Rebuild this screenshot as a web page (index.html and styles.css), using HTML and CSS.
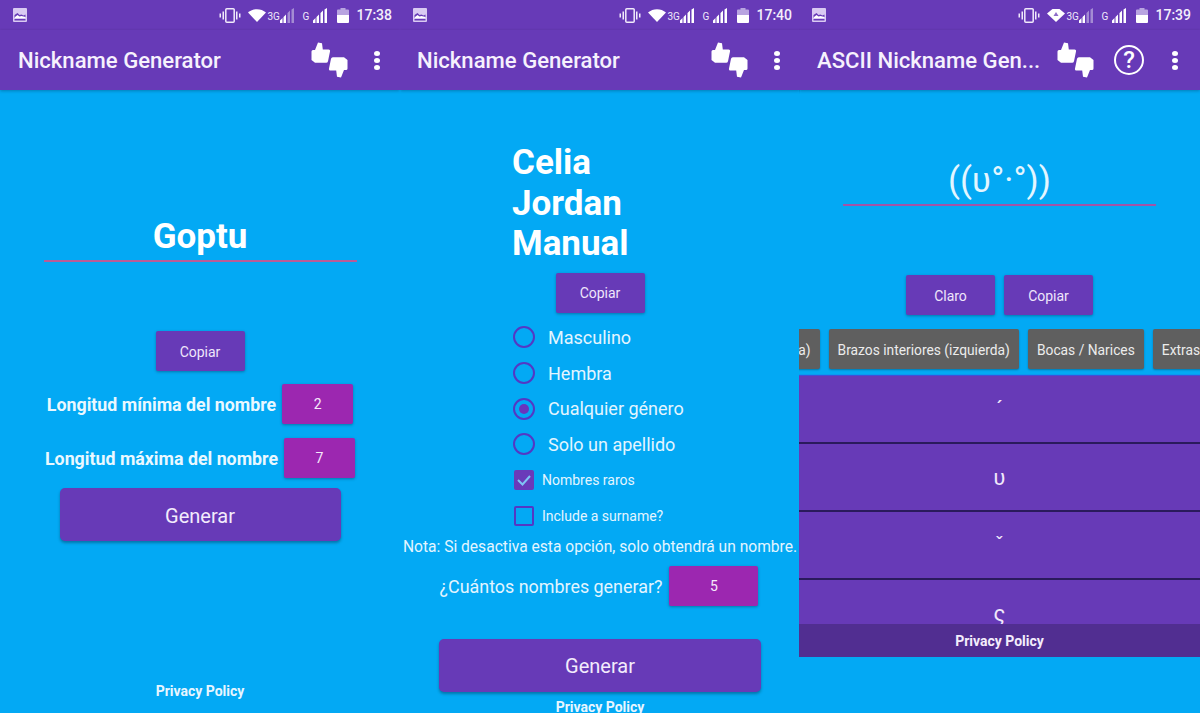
FILE: index.html
```html
<!DOCTYPE html>
<html lang="es">
<head>
    <meta charset="UTF-8">
    <meta name="viewport" content="width=device-width, initial-scale=1.0">
    <title>Nickname Generator</title>
    <link rel="stylesheet" href="styles.css">
</head>
<body>
    <svg class="defs" width="0" height="0">
        <symbol id="i-image" viewBox="0 0 14 14">
            <path fill="#d9c9f2" d="M0 1a1 1 0 0 1 1-1h12a1 1 0 0 1 1 1v12a1 1 0 0 1-1 1H1a1 1 0 0 1-1-1zM1.500 1.500v8h11v-3l-2 1-2-1-2 .5-2-2-3 2zM1.500 11v1.500h11V11z"/>
            <path fill="#fff" d="M2 9l2.500-2 2 1.500 2-.5 2 .5 2 .5v1H2z"/>
        </symbol>
        <symbol id="i-vibrate" viewBox="0 0 22 15">
            <path fill="none" stroke="#f1eafb" stroke-width="1.500" d="M7.800.8h6.400a1 1 0 0 1 1 1v11.400a1 1 0 0 1-1 1H7.800a1 1 0 0 1-1-1V1.800a1 1 0 0 1 1-1z"/>
            <path fill="#f1eafb" d="M3.500 3.500h1.500v8H3.500zM17 3.500h1.500v8H17zM.5 5.500H2v4H.5zM20 5.500h1.500v4H20z"/>
        </symbol>
        <symbol id="i-wifi" viewBox="0 0 18 13">
            <path fill="#fff" d="M0 3.500C5-1 13-1 18 3.500L9 13z"/>
        </symbol>
        <symbol id="i-wifi-data" viewBox="0 0 18 13">
            <path fill="#fff" d="M0 4.500L5.500 0h7L18 4.500 9 13z"/>
            <path fill="#8e6cc9" d="M9 3l2.500 4h-5z"/>
        </symbol>
        <symbol id="i-signal-weak" viewBox="0 0 15 15">
            <path fill="#fff" d="M0 15v-2.500L2.500 10v5zM3.500 15V9L6 6.500V15z"/>
            <path fill="#a48bd3" d="M7.500 15V5L10 2.500V15zM11.500 15V1.500L14 0v15z"/>
        </symbol>
        <symbol id="i-signal" viewBox="0 0 15 15">
            <path fill="#fff" d="M0 15v-2.500L2.500 10v5zM3.500 15V9L6 6.500V15zM7.500 15V5L10 2.500V15zM11.500 15V1.500L14 0v15z"/>
        </symbol>
        <symbol id="i-battery" viewBox="0 0 12 15">
            <path fill="#b8a4e0" d="M3.500 0h5v1.500H11a1 1 0 0 1 1 1V7H0V2.500a1 1 0 0 1 1-1h2.500z"/>
            <path fill="#fff" d="M0 7h12v7a1 1 0 0 1-1 1H1a1 1 0 0 1-1-1z"/>
        </symbol>
        <symbol id="i-thumbs" viewBox="0 0 37 36">
            <path fill="#fff" d="M7 .5l4 .8.8 6.200h5.700a1.500 1.500 0 0 1 1.500 2L17 19.200a2 2 0 0 1-2 1.500H4L.5 18V9.500A1.500 1.500 0 0 1 2 8h2z"/>
            <path fill="#fff" transform="rotate(180 18.500 18)" d="M7 .5l4 .8.8 6.200h5.700a1.500 1.500 0 0 1 1.500 2L17 19.200a2 2 0 0 1-2 1.500H4L.5 18V9.500A1.500 1.500 0 0 1 2 8h2z"/>
        </symbol>
    </svg>

    <div class="phones">
        <section class="phone">
            <div class="statusbar">
                <svg class="ic-image"><use href="#i-image"/></svg>
                <div class="status-right">
                    <svg class="ic-vibrate"><use href="#i-vibrate"/></svg>
                    <svg class="ic-wifi"><use href="#i-wifi"/></svg>
                    <span class="net net-3g">3G</span>
                    <svg class="ic-signal"><use href="#i-signal-weak"/></svg>
                    <span class="net net-g">G</span>
                    <svg class="ic-signal"><use href="#i-signal"/></svg>
                    <svg class="ic-battery"><use href="#i-battery"/></svg>
                    <span class="clock">17:38</span>
                </div>
            </div>
            <header class="toolbar">
                <div class="toolbar-title">Nickname Generator</div>
                <svg class="ic-thumbs"><use href="#i-thumbs"/></svg>
                <div class="overflow-menu"><i></i><i></i><i></i></div>
            </header>
            <main class="screen">
                <div class="result result-one">Goptu</div>
                <button class="btn copy-one">Copiar</button>
                <div class="len-row len-first"><span>Longitud mínima del nombre</span><div class="num-box">2</div></div>
                <div class="len-row"><span>Longitud máxima del nombre</span><div class="num-box">7</div></div>
                <button class="btn-big big-one">Generar</button>
                <div class="privacy privacy-one">Privacy Policy</div>
            </main>
        </section>

        <section class="phone">
            <div class="statusbar">
                <svg class="ic-image"><use href="#i-image"/></svg>
                <div class="status-right">
                    <svg class="ic-vibrate"><use href="#i-vibrate"/></svg>
                    <svg class="ic-wifi"><use href="#i-wifi"/></svg>
                    <span class="net net-3g">3G</span>
                    <svg class="ic-signal"><use href="#i-signal"/></svg>
                    <span class="net net-g">G</span>
                    <svg class="ic-signal"><use href="#i-signal"/></svg>
                    <svg class="ic-battery"><use href="#i-battery"/></svg>
                    <span class="clock">17:40</span>
                </div>
            </div>
            <header class="toolbar toolbar-mid">
                <div class="toolbar-title">Nickname Generator</div>
                <svg class="ic-thumbs"><use href="#i-thumbs"/></svg>
                <div class="overflow-menu"><i></i><i></i><i></i></div>
            </header>
            <main class="screen">
                <div class="names">Celia<br>Jordan<br>Manual</div>
                <button class="btn copy-two">Copiar</button>
                <div class="options">
                    <div class="radio-row"><span class="radio"></span>Masculino</div>
                    <div class="radio-row"><span class="radio"></span>Hembra</div>
                    <div class="radio-row"><span class="radio radio-on"></span>Cualquier género</div>
                    <div class="radio-row"><span class="radio"></span>Solo un apellido</div>
                    <div class="check-row">
                        <span class="check check-on">
                            <svg viewBox="0 0 20 20"><path d="M4 10l4.500 4.500L16 6" fill="none" stroke="#7fc4f5" stroke-width="2"/></svg>
                        </span>Nombres raros
                    </div>
                    <div class="check-row"><span class="check"></span>Include a surname?</div>
                </div>
                <div class="note">Nota: Si desactiva esta opción, solo obtendrá un nombre.</div>
                <div class="count-row"><span>¿Cuántos nombres generar?</span><div class="num-box num-wide">5</div></div>
                <button class="btn-big big-two">Generar</button>
                <div class="privacy privacy-two">Privacy Policy</div>
            </main>
        </section>

        <section class="phone phone-ascii">
            <div class="statusbar">
                <svg class="ic-image"><use href="#i-image"/></svg>
                <div class="status-right">
                    <svg class="ic-vibrate"><use href="#i-vibrate"/></svg>
                    <svg class="ic-wifi"><use href="#i-wifi-data"/></svg>
                    <span class="net net-3g">3G</span>
                    <svg class="ic-signal"><use href="#i-signal-weak"/></svg>
                    <span class="net net-g">G</span>
                    <svg class="ic-signal"><use href="#i-signal"/></svg>
                    <svg class="ic-battery"><use href="#i-battery"/></svg>
                    <span class="clock">17:39</span>
                </div>
            </div>
            <header class="toolbar">
                <div class="toolbar-title">ASCII Nickname Gen...</div>
                <svg class="ic-thumbs"><use href="#i-thumbs"/></svg>
                <div class="help">?</div>
                <div class="overflow-menu"><i></i><i></i><i></i></div>
            </header>
            <main class="screen">
                <div class="result result-ascii">((ʋ°·°))</div>
                <div class="btn-pair">
                    <button class="btn">Claro</button>
                    <button class="btn">Copiar</button>
                </div>
                <div class="tabs">
                    <div class="tab">Brazos interiores (derecha)</div>
                    <div class="tab">Brazos interiores (izquierda)</div>
                    <div class="tab">Bocas / Narices</div>
                    <div class="tab">Extras</div>
                </div>
                <div class="glyph-list">
                    <div class="glyph">´</div>
                    <div class="glyph">ʋ</div>
                    <div class="glyph">ˇ</div>
                    <div class="glyph">ς</div>
                </div>
                <div class="privacy-bar">Privacy Policy</div>
            </main>
        </section>
    </div>
</body>
</html>
```

FILE: styles.css
```css
body {
    margin: 0;
    background: #03a9f4;
    font-family: Roboto, "Liberation Sans", sans-serif;
    color: #fff;
}
button {
    font-family: inherit;
    border: none;
    padding: 0;
    color: #fff;
}
.defs {
    display: block;
    height: 0;
}
.phones {
    display: flex;
    width: 1200px;
    height: 713px;
    overflow: hidden;
}
.phone {
    width: 400px;
    height: 713px;
    overflow: hidden;
    display: flex;
    flex-direction: column;
}
.phone-ascii {
    width: 401px;
    margin-left: -1px;
}

/* status bar */
.statusbar {
    height: 30px;
    flex: none;
    background: #673ab7;
    display: flex;
    align-items: center;
    padding: 0 8px 0 13px;
}
.phone-ascii .statusbar {
    padding-right: 9px;
}
.ic-image {
    width: 14px;
    height: 14px;
}
.status-right {
    margin-left: auto;
    display: flex;
    align-items: center;
}
.ic-vibrate {
    width: 22px;
    height: 15px;
}
.ic-wifi {
    width: 18px;
    height: 13px;
    margin-left: 7px;
}
.net {
    font-size: 10px;
    align-self: flex-start;
    margin-top: 4px;
    color: #efe8fa;
}
.net-3g {
    margin-left: 1px;
    width: 13px;
}
.net-g {
    margin-left: 7px;
    width: 11px;
}
.ic-signal {
    width: 15px;
    height: 15px;
}
.ic-battery {
    width: 12px;
    height: 15px;
    margin-left: 9px;
}
.clock {
    font-size: 14px;
    font-weight: 500;
    margin-left: 7px;
    color: #f3eefb;
}

/* toolbar */
.toolbar {
    height: 60px;
    flex: none;
    background: #673ab7;
    box-shadow: 0 1px 3px rgba(0, 0, 0, 0.25);
    display: flex;
    align-items: center;
    padding: 0 20px 0 18px;
    position: relative;
}
.toolbar-mid {
    padding-left: 17px;
}
.phone-ascii .toolbar {
    padding-right: 22px;
}
.toolbar-title {
    font-size: 22.100px;
    font-weight: 500;
    color: #f6f1fd;
    margin-right: auto;
    white-space: nowrap;
}
.ic-thumbs {
    width: 37px;
    height: 36px;
}
.overflow-menu {
    width: 6px;
    margin-left: 26px;
    display: flex;
    flex-direction: column;
    gap: 2px;
}
.overflow-menu i {
    width: 6px;
    height: 5px;
    border-radius: 50%;
    background: #fff;
}
.help {
    width: 26px;
    height: 26px;
    margin-left: 20px;
    margin-right: 2px;
    border: 2.500px solid #fff;
    border-radius: 50%;
    font-size: 24px;
    font-weight: 500;
    line-height: 26px;
    text-align: center;
}

/* content */
.screen {
    flex: 1;
    display: flex;
    flex-direction: column;
    align-items: center;
}
.result {
    width: 313px;
    box-sizing: border-box;
    text-align: center;
    border-bottom: 2px solid #b95c98;
}
.result-one {
    margin-top: 126px;
    height: 46px;
    font-size: 35px;
    font-weight: 700;
    line-height: 41px;
}
.result-ascii {
    margin-top: 68px;
    height: 48px;
    font-size: 35px;
    line-height: 46px;
    color: #e3f6ff;
    border-bottom-color: #a254a8;
}
.btn {
    width: 89px;
    height: 40px;
    background: #673ab7;
    border-radius: 2px;
    box-shadow: 0 1px 3px rgba(0, 0, 0, 0.3);
    font-size: 14px;
    color: #efe6fb;
}
.copy-one {
    margin-top: 69px;
    padding-top: 2px;
}
.len-row {
    display: flex;
    align-items: center;
    gap: 6px;
    margin-top: 14px;
    font-size: 17.800px;
    font-weight: 700;
    color: #eaf8ff;
    white-space: nowrap;
}
.num-box {
    width: 71px;
    height: 40px;
    background: #9c27b0;
    border-radius: 2px;
    box-shadow: 0 1px 3px rgba(0, 0, 0, 0.3);
    font-size: 14px;
    font-weight: 400;
    line-height: 40px;
    text-align: center;
    color: #f6e9fb;
}
.len-first {
    margin-top: 13px;
}
.btn-big {
    height: 53px;
    background: #673ab7;
    border-radius: 5px;
    box-shadow: 0 2px 3px rgba(0, 0, 0, 0.3);
    font-size: 20px;
    color: #f3ecfc;
}
.big-one {
    width: 281px;
    margin-top: 10px;
    padding-top: 2px;
}
.big-two {
    width: 322px;
    margin-top: 33px;
}
.privacy {
    font-size: 14px;
    font-weight: 700;
    line-height: 20px;
    color: #e8f6ff;
}
.privacy-one {
    margin-top: 140px;
}
.privacy-two {
    margin-top: 5px;
}

/* middle screen */
.names {
    align-self: flex-start;
    margin: 53px 0 0 112px;
    font-size: 35px;
    font-weight: 700;
    line-height: 40.500px;
}
.copy-two {
    margin-top: 8px;
}
.options {
    align-self: flex-start;
    margin: 7px 0 0 113px;
}
.radio-row {
    height: 35.700px;
    display: flex;
    align-items: center;
    font-size: 18px;
    color: #e3f5ff;
}
.radio {
    width: 22px;
    height: 22px;
    box-sizing: border-box;
    border: 2px solid #5438c4;
    border-radius: 50%;
    margin-right: 13px;
    display: flex;
    align-items: center;
    justify-content: center;
}
.radio-on::after {
    content: "";
    width: 10px;
    height: 10px;
    border-radius: 50%;
    background: #6a35bd;
}
.check-row {
    height: 36px;
    display: flex;
    align-items: center;
    font-size: 14px;
    color: #e3f5ff;
}
.check {
    width: 20px;
    height: 20px;
    box-sizing: border-box;
    border: 2px solid #5438c4;
    border-radius: 2px;
    margin: 0 8px 0 1px;
}
.check-on {
    background: #6a3ab9;
    border-color: #6a3ab9;
}
.check svg {
    display: block;
    width: 20px;
    height: 20px;
    margin: -2px;
}
.note {
    font-size: 15.600px;
    line-height: 26px;
    color: #e3f5ff;
    white-space: nowrap;
}
.count-row {
    display: flex;
    align-items: center;
    gap: 7px;
    margin-top: 6px;
    margin-left: -2px;
    font-size: 17.900px;
    color: #e3f5ff;
    white-space: nowrap;
}
.num-wide {
    width: 89px;
}

/* ascii screen */
.btn-pair {
    display: flex;
    gap: 9px;
    margin-top: 69px;
}
.btn-pair .btn {
    padding-top: 2px;
}
.tabs {
    width: 100%;
    display: flex;
    gap: 9px;
    margin-top: 14px;
    overflow: hidden;
    padding-bottom: 3px;
    margin-bottom: -3px;
}
.tab {
    flex: none;
    height: 40px;
    padding: 0 9px;
    background: #5f5f5f;
    border-radius: 2px;
    box-shadow: 0 1px 2px rgba(0, 0, 0, 0.3);
    font-size: 13.800px;
    line-height: 42px;
    color: #ececec;
    white-space: nowrap;
}
.tab:first-child {
    margin-left: -163px;
}
.glyph-list {
    width: 100%;
    height: 248px;
    margin-top: 7px;
    overflow: hidden;
    box-shadow: 0 -1px 1px #3f51d8;
}
.glyph {
    height: 66px;
    background: #673ab7;
    border-bottom: 2px solid #2a1a5c;
    font-size: 22px;
    line-height: 68px;
    text-align: center;
    color: #f1e8fb;
}
.privacy-bar {
    width: 100%;
    height: 33px;
    background: #512e91;
    font-size: 14px;
    font-weight: 700;
    line-height: 34px;
    text-align: center;
    color: #f4edfc;
}
```
